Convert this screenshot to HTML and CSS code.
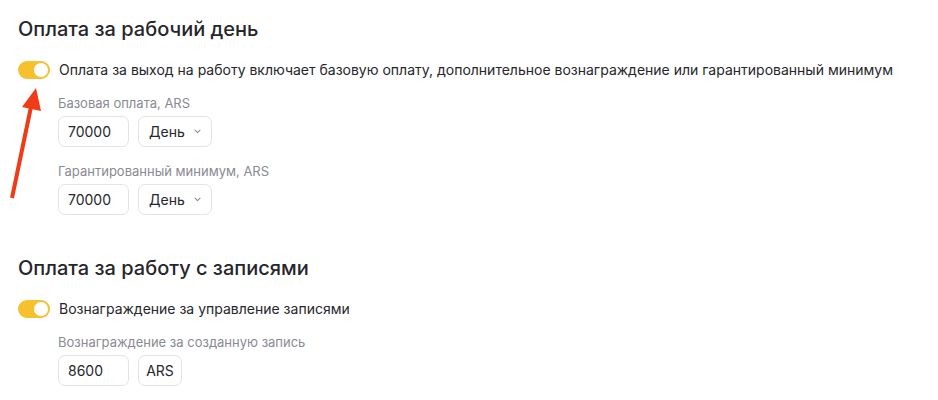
FILE: index.html
```html
<!DOCTYPE html>
<html lang="ru">
<head>
<meta charset="utf-8">
<link rel="stylesheet" href="styles.css">
</head>
<body>
<div class="page">
  <section class="section">
    <h2 class="title">Оплата за рабочий день</h2>
    <div class="toggle-row">
      <span class="toggle"><span class="knob"></span></span>
      <span class="toggle-label">Оплата за выход на работу включает базовую оплату, дополнительное вознаграждение или гарантированный минимум</span>
    </div>
    <div class="fields">
      <div class="field">
        <div class="label">Базовая оплата, ARS</div>
        <div class="controls">
          <div class="input">70000</div>
          <div class="select">День <svg class="chev" width="7" height="5" viewBox="0 0 7 5"><path d="M1 1.2 L3.5 3.6 L6 1.2" fill="none" stroke="#8b8b94" stroke-width="1.1" stroke-linecap="round" stroke-linejoin="round"/></svg></div>
        </div>
      </div>
      <div class="field">
        <div class="label">Гарантированный минимум, ARS</div>
        <div class="controls">
          <div class="input">70000</div>
          <div class="select">День <svg class="chev" width="7" height="5" viewBox="0 0 7 5"><path d="M1 1.2 L3.5 3.6 L6 1.2" fill="none" stroke="#8b8b94" stroke-width="1.1" stroke-linecap="round" stroke-linejoin="round"/></svg></div>
        </div>
      </div>
    </div>
  </section>
  <section class="section second">
    <h2 class="title">Оплата за работу с записями</h2>
    <div class="toggle-row">
      <span class="toggle"><span class="knob"></span></span>
      <span class="toggle-label">Вознаграждение за управление записями</span>
    </div>
    <div class="fields">
      <div class="field">
        <div class="label">Вознаграждение за созданную запись</div>
        <div class="controls">
          <div class="input">8600</div>
          <div class="unit">ARS</div>
        </div>
      </div>
    </div>
  </section>
  <svg class="arrow" width="60" height="130" viewBox="0 0 60 130">
    <line x1="12" y1="118" x2="32" y2="22" stroke="#ef3b18" stroke-width="4"/>
    <polygon points="36,8 22,27 41,31" fill="#ef3b18"/>
  </svg>
</div>
</body>
</html>
```
FILE: styles.css
```css
html, body {
  margin: 0;
  padding: 0;
  background: #ffffff;
}
body {
  font-family: Inter, "Noto Sans", sans-serif;
  color: #26262b;
  width: 938px;
  height: 400px;
  overflow: hidden;
}
.page {
  position: relative;
  padding: 17px 18px 0 18px;
}
.section.second {
  margin-top: 41px;
}
.title {
  margin: 0;
  font-size: 20px;
  line-height: 24px;
  font-weight: 500;
  color: #26262b;
  letter-spacing: 0;
}
.toggle-row {
  display: flex;
  align-items: center;
  gap: 9px;
  margin-top: 20px;
  height: 18px;
}
.toggle {
  display: flex;
  justify-content: flex-end;
  align-items: center;
  width: 32px;
  height: 18px;
  border-radius: 9px;
  background: #f6c02f;
  padding: 0 2px;
  box-sizing: border-box;
  flex: none;
}
.knob {
  width: 14px;
  height: 14px;
  border-radius: 50%;
  background: #ffffff;
}
.toggle-label {
  font-size: 14px;
  line-height: 18px;
  color: #26262b;
}
.fields {
  display: flex;
  flex-direction: column;
  gap: 16px;
  padding-left: 40px;
  margin-top: 16px;
}
.label {
  font-size: 13px;
  line-height: 16px;
  color: #8a8a93;
}
.controls {
  display: flex;
  gap: 9px;
  margin-top: 5px;
}
.input, .select, .unit {
  box-sizing: border-box;
  height: 31px;
  border: 1px solid #e2e2ea;
  border-radius: 7px;
  font-size: 14px;
  color: #26262b;
  display: flex;
  align-items: center;
}
.input {
  width: 71px;
  padding-left: 9px;
}
.select {
  width: 74px;
  padding-left: 10px;
  gap: 9px;
}
.unit {
  width: 44px;
  justify-content: center;
}
.chev {
  display: block;
}
.arrow {
  position: absolute;
  left: 0;
  top: 80px;
}
```
